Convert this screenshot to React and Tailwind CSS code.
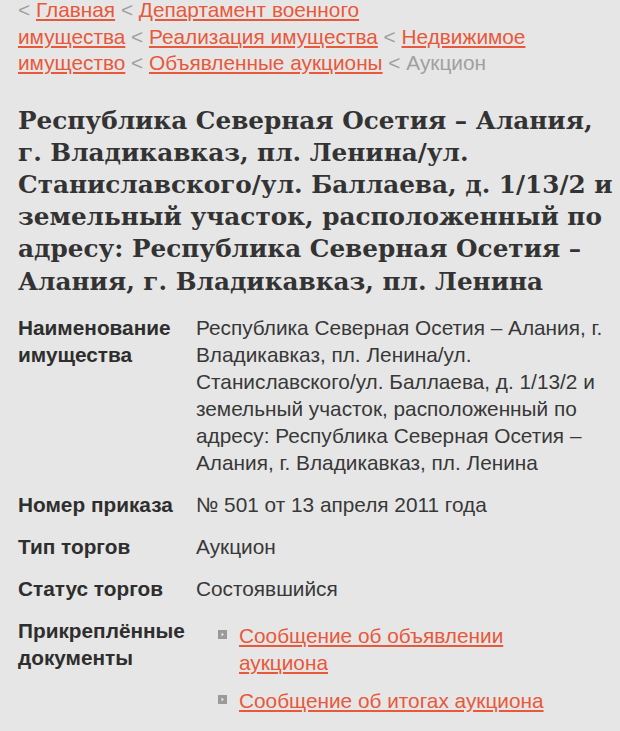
const crumbs = [
  { label: 'Главная' },
  { label: <>Департамент военного<br />имущества</> },
  { label: 'Реализация имущества' },
  { label: <>Недвижимое<br />имущество</> },
  { label: 'Объявленные аукционы' },
];

const title = [
  'Республика Северная Осетия – Алания,',
  'г. Владикавказ, пл. Ленина/ул.',
  'Станиславского/ул. Баллаева, д. 1/13/2 и',
  'земельный участок, расположенный по',
  'адресу: Республика Северная Осетия –',
  'Алания, г. Владикавказ, пл. Ленина',
];

const docs = ['Сообщение об объявлении аукциона', 'Сообщение об итогах аукциона'];

const Bullet = () => (
  <svg width="9" height="9" viewBox="0 0 9 9" className="shrink-0">
    <rect width="9" height="9" fill="#9a9a9a" />
    <path d="M3.5 2.5 L6 4.5 L3.5 6.5 Z" fill="#e6e6e6" />
  </svg>
);

const Row = ({ label, children }) => (
  <div className="flex py-[7.5px]">
    <div className="w-[178px] shrink-0 font-bold text-[#2e2e2e]">{label}</div>
    <div className="flex-1">{children}</div>
  </div>
);

export default function App() {
  return (
    <div
      className="min-h-[731px] bg-[#e6e6e6] pl-[18px] pr-[6px] pb-[10px] text-[#383838] text-[20.8px] leading-[27px]"
      style={{ fontFamily: '"Liberation Sans", Arial, sans-serif' }}
    >
      <div className="leading-[26.5px] -mt-[3px] text-[#a0a0a0]">
        {crumbs.map((c, i) => (
          <span key={i}>
            {'< '}
            <a href="#" className="text-[#e8583a] underline">
              {c.label}
            </a>{' '}
          </span>
        ))}
        <span>{'< Аукцион'}</span>
      </div>

      <h1
        className="mt-[28px] text-[24.7px] leading-[32.2px] font-bold text-[#333]"
        style={{ fontFamily: '"DejaVu Serif", Georgia, serif' }}
      >
        {title.map((t, i) => (
          <span key={i} className="block whitespace-nowrap">
            {t}
          </span>
        ))}
      </h1>

      <div className="mt-[9px]">
        <Row label={<>Наименование<br />имущества</>}>
          Республика Северная Осетия – Алания, г. Владикавказ, пл. Ленина/ул. Станиславского/ул. Баллаева, д. 1/13/2 и земельный участок, расположенный по адресу: Республика Северная Осетия – Алания, г. Владикавказ, пл. Ленина
        </Row>
        <Row label="Номер приказа">№ 501 от 13 апреля 2011 года</Row>
        <Row label="Тип торгов">Аукцион</Row>
        <Row label="Статус торгов">Состоявшийся</Row>
        <Row label={<>Прикреплённые<br />документы</>}>
          <ul className="mt-[5px] pl-[22px] flex flex-col gap-[11px]">
            {docs.map((d) => (
              <li key={d} className="flex items-start gap-[12px]">
                <span className="mt-[8px]">
                  <Bullet />
                </span>
                <a href="#" className="max-w-[330px] text-[#e8583a] underline">
                  {d}
                </a>
              </li>
            ))}
          </ul>
        </Row>
      </div>
    </div>
  );
}
